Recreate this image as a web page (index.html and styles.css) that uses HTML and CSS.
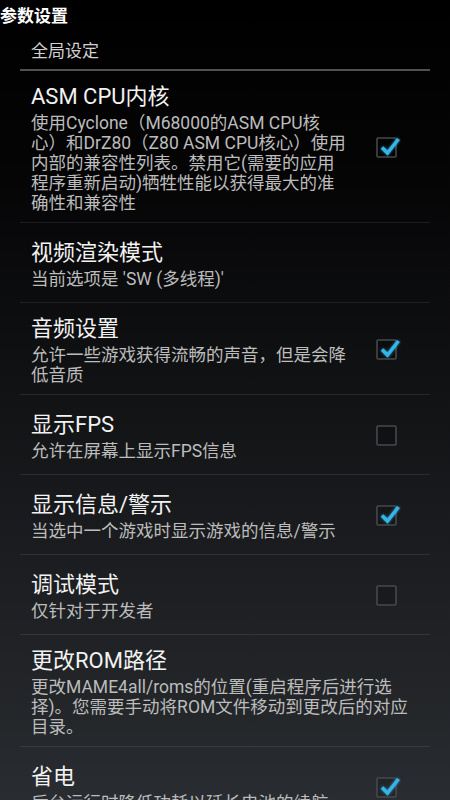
FILE: index.html
```html
<!DOCTYPE html>
<html lang="zh-CN">
<head>
  <meta charset="UTF-8">
  <title>参数设置</title>
  <link rel="stylesheet" href="styles.css">
</head>
<body>
  <div class="titlebar">参数设置</div>

  <div class="prefs">
    <div class="category">全局设定</div>

    <div class="pref">
      <div class="pref-text">
        <div class="pref-title">ASM CPU内核</div>
        <div class="pref-desc">使用Cyclone（M68000的ASM CPU核心）和DrZ80（Z80 ASM CPU核心）使用内部的兼容性列表。禁用它(需要的应用程序重新启动)牺牲性能以获得最大的准确性和兼容性</div>
      </div>
      <div class="pref-widget">
        <svg class="check" viewBox="0 0 24 24" width="24" height="24">
          <rect x="1" y="3" width="19" height="19" rx="1"/>
          <path d="M6 12.5 L11.5 18 L22.5 4"/>
        </svg>
      </div>
    </div>

    <div class="pref">
      <div class="pref-text">
        <div class="pref-title">视频渲染模式</div>
        <div class="pref-desc">当前选项是 'SW (多线程)'</div>
      </div>
    </div>

    <div class="pref">
      <div class="pref-text">
        <div class="pref-title">音频设置</div>
        <div class="pref-desc">允许一些游戏获得流畅的声音，但是会降低音质</div>
      </div>
      <div class="pref-widget">
        <svg class="check" viewBox="0 0 24 24" width="24" height="24">
          <rect x="1" y="3" width="19" height="19" rx="1"/>
          <path d="M6 12.5 L11.5 18 L22.5 4"/>
        </svg>
      </div>
    </div>

    <div class="pref">
      <div class="pref-text">
        <div class="pref-title">显示FPS</div>
        <div class="pref-desc">允许在屏幕上显示FPS信息</div>
      </div>
      <div class="pref-widget">
        <svg class="check off" viewBox="0 0 24 24" width="24" height="24">
          <rect x="1" y="3" width="19" height="19" rx="1"/>
        </svg>
      </div>
    </div>

    <div class="pref">
      <div class="pref-text">
        <div class="pref-title">显示信息/警示</div>
        <div class="pref-desc">当选中一个游戏时显示游戏的信息/警示</div>
      </div>
      <div class="pref-widget">
        <svg class="check" viewBox="0 0 24 24" width="24" height="24">
          <rect x="1" y="3" width="19" height="19" rx="1"/>
          <path d="M6 12.5 L11.5 18 L22.5 4"/>
        </svg>
      </div>
    </div>

    <div class="pref">
      <div class="pref-text">
        <div class="pref-title">调试模式</div>
        <div class="pref-desc">仅针对于开发者</div>
      </div>
      <div class="pref-widget">
        <svg class="check off" viewBox="0 0 24 24" width="24" height="24">
          <rect x="1" y="3" width="19" height="19" rx="1"/>
        </svg>
      </div>
    </div>

    <div class="pref">
      <div class="pref-text">
        <div class="pref-title">更改ROM路径</div>
        <div class="pref-desc">更改MAME4all/roms的位置(重启程序后进行选择)。您需要手动将ROM文件移动到更改后的对应目录。</div>
      </div>
    </div>

    <div class="pref">
      <div class="pref-text">
        <div class="pref-title">省电</div>
        <div class="pref-desc">后台运行时降低功耗以延长电池的续航</div>
      </div>
      <div class="pref-widget">
        <svg class="check" viewBox="0 0 24 24" width="24" height="24">
          <rect x="1" y="3" width="19" height="19" rx="1"/>
          <path d="M6 12.5 L11.5 18 L22.5 4"/>
        </svg>
      </div>
    </div>
  </div>
</body>
</html>
```

FILE: styles.css
```css
html, body {
  margin: 0;
  padding: 0;
}

body {
  font-family: Roboto, "Noto Sans CJK SC", sans-serif;
  background: linear-gradient(to bottom, #000 0, #050506 180px, #292c30 800px);
  min-height: 800px;
  overflow: hidden;
  color: #eee;
}

.titlebar {
  height: 32px;
  line-height: 32px;
  font-size: 17px;
  font-weight: bold;
  color: #fff;
}

.prefs {
  margin: 0 20px;
}

.category {
  padding: 9px 11px 8px;
  font-size: 17px;
  line-height: 20px;
  color: #d0d0d0;
  border-bottom: 2px solid #4e5054;
}

/* 单个设置项 */
.pref {
  display: flex;
  align-items: center;
  box-sizing: border-box;
  min-height: 80px;
  padding: 10px 19px 9px 11px;
  border-bottom: 1px solid rgba(255, 255, 255, 0.09);
}

.pref-text {
  flex: 1;
  min-width: 0;
}

.pref-title {
  font-size: 22px;
  line-height: 32px;
  color: #f2f2f2;
}

.pref-desc {
  font-size: 17.5px;
  line-height: 20px;
  color: #bcbcbc;
}

.pref-widget {
  flex: 0 0 65px;
  display: flex;
  justify-content: flex-end;
  padding-right: 11px;
  box-sizing: border-box;
}

/* 复选框 */
.check {
  display: block;
  overflow: visible;
}

.check rect {
  fill: rgba(0, 0, 0, 0.15);
  stroke: #45484d;
  stroke-width: 1.6;
}

.check path {
  fill: none;
  stroke: #33b5e5;
  stroke-width: 3.6;
  stroke-linejoin: miter;
  filter: drop-shadow(0 0 1.5px rgba(51, 181, 229, 0.7));
}
```
